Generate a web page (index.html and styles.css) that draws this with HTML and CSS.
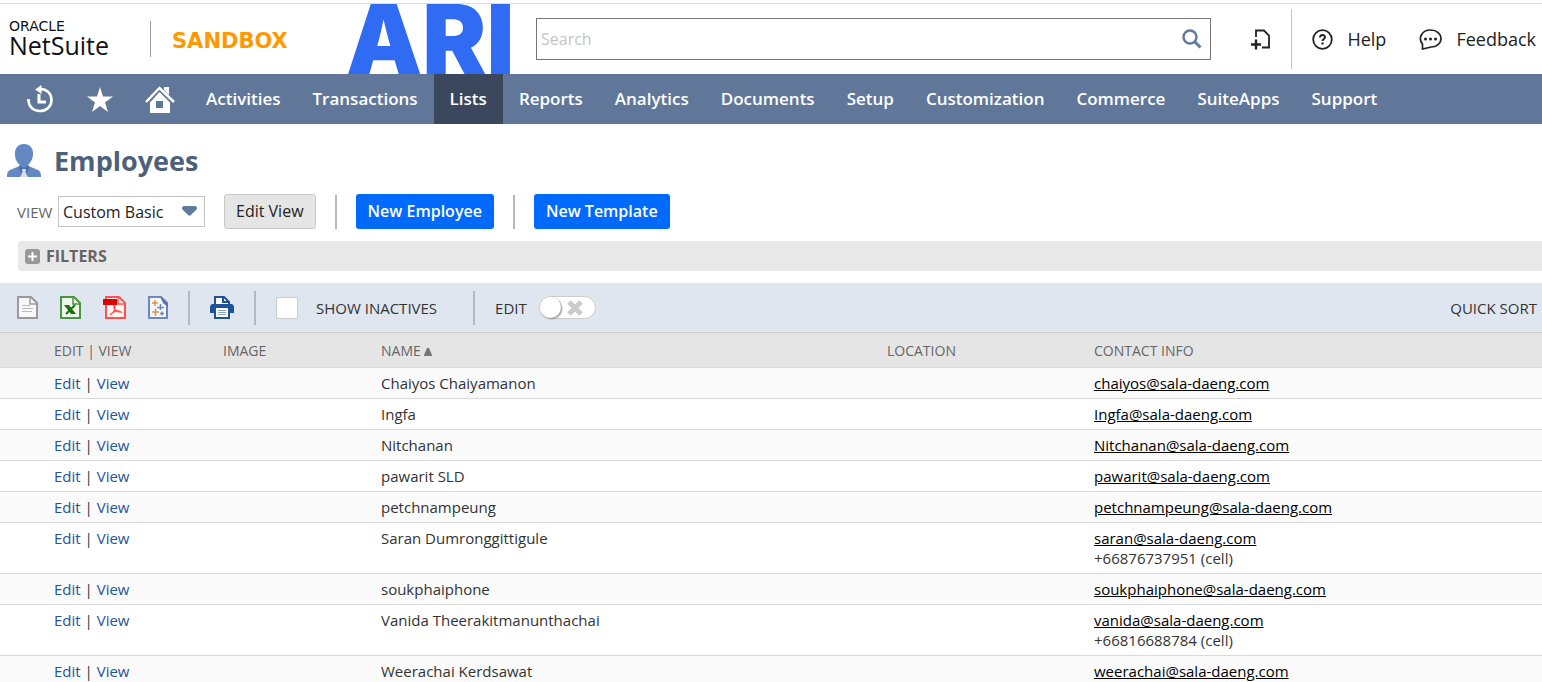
FILE: index.html
```html
<!DOCTYPE html>
<html lang="en">
<head>
    <meta charset="UTF-8">
    <meta name="viewport" content="width=device-width, initial-scale=1.0">
    <title>Employees - NetSuite</title>
    <link rel="stylesheet" href="styles.css">
</head>
<body>
    <header class="header">
        <a href="#" class="brand">
            <span class="brand-oracle">ORACLE</span>
            <span class="brand-name">NetSuite</span>
        </a>
        <span class="environment">SANDBOX</span>
        <a href="#" class="company">ARI</a>
        <form class="search">
            <input type="text" placeholder="Search" aria-label="Search">
            <button type="button" aria-label="Run search">
                <svg width="20" height="20" viewBox="0 0 20 20" fill="none" stroke="#5f7a9f" stroke-width="2.4"><circle cx="8" cy="8" r="6.5"/><path d="M12.5 12.5L18.5 18.5" stroke-width="3"/></svg>
            </button>
        </form>
        <button type="button" class="create-new" aria-label="Create new">
            <svg width="20" height="21" viewBox="0 0 20 21" fill="none" stroke="#222" stroke-width="1.8"><path d="M5 8V1.5H13L18 6.5V18.5H11"/><path d="M0 15.5H10M5 10.5V20.5" stroke-width="2.4"/></svg>
        </button>
        <div class="header-links">
            <a href="#" class="header-link">
                <svg width="21" height="21" viewBox="0 0 21 21" fill="none" stroke="#222" stroke-width="1.8"><circle cx="10.5" cy="10.5" r="9.3"/><path d="M8 8.5C8 5.2 13 5.2 13 8.2C13 10 10.5 10 10.5 12" stroke-width="2"/><path d="M10.5 13.5V15.5" stroke-width="2.2"/></svg>
                Help
            </a>
            <a href="#" class="header-link">
                <svg width="23" height="21" viewBox="0 0 23 21" fill="none" stroke="#222" stroke-width="1.7"><path d="M3.5 20V15C-1.5 9 3 1 11.5 1C18 1 22 5 22 9.5C22 14.500 17.5 18 12 18Z"/><g fill="#222" stroke="none"><circle cx="6.5" cy="10" r="1.5"/><circle cx="11.5" cy="10" r="1.5"/><circle cx="16.5" cy="10" r="1.5"/></g></svg>
                Feedback
            </a>
        </div>
    </header>

    <nav class="navbar">
        <a href="#" class="nav-icon" aria-label="Recent records">
            <svg width="26" height="28" viewBox="0 0 26 28" fill="none" stroke="#fff"><path d="M1.5 14C1 21 6 26 13 26C20 26 24.5 21 24.5 15C24.5 8.5 20 4 13 4" stroke-width="2.6"/><path d="M8 4.5L14.5 0V9Z" fill="#fff" stroke="none"/><path d="M12 9V17H19" stroke-width="3"/></svg>
        </a>
        <a href="#" class="nav-icon" aria-label="Shortcuts">
            <svg width="26" height="25" viewBox="0 0 26 25"><path d="M13 0L16 9.5H26L18 15.4L21 25L13 19L5 25L8 15.4L0 9.5H10Z" fill="#fff"/></svg>
        </a>
        <a href="#" class="nav-icon" aria-label="Home">
            <svg width="30" height="27" viewBox="0 0 30 27"><path d="M19 1H24V9L19 4Z" fill="#fff"/><path d="M1 16L14.5 2L29 16" fill="none" stroke="#fff" stroke-width="2.5"/><path d="M14.5 6L25 16.5V27H5V16.5ZM11 15V22H18V15Z" fill="#fff" fill-rule="evenodd"/></svg>
        </a>
        <a href="#">Activities</a>
        <a href="#">Transactions</a>
        <a href="#" class="active">Lists</a>
        <a href="#">Reports</a>
        <a href="#">Analytics</a>
        <a href="#">Documents</a>
        <a href="#">Setup</a>
        <a href="#">Customization</a>
        <a href="#">Commerce</a>
        <a href="#">SuiteApps</a>
        <a href="#">Support</a>
    </nav>

    <main>
        <div class="page-title">
            <svg width="34" height="34" viewBox="0 0 34 34"><path d="M17 0C23 0 26.500 4 26 11C25.5 16 23 19 21.5 20.5V22L31 26C33.5 27.5 34 29 34 33H0C0 29 .5 27.5 3 26L12.5 22V20.5C10 18.5 8 15 8 11C7.5 4 11 0 17 0Z" fill="#6488c3"/><path d="M12.5 21.5L17 24L21.5 21.5L22.5 24L20 27L21 33H13L14 27L11.5 24Z" fill="#4d70a8"/><path d="M15 25H19L18.5 28L21 33H13L15.5 28Z" fill="#d5dcea"/></svg>
            <h1>Employees</h1>
        </div>

        <div class="view-bar">
            <label for="view">VIEW</label>
            <div class="select-wrap">
                <select id="view">
                    <option>Custom Basic</option>
                    <option>All</option>
                </select>
                <svg width="15" height="10" viewBox="0 0 15 10"><path d="M2 0H13Q15 0 15 3L8.5 9.5H6.5L0 3Q0 0 2 0Z" fill="#5f7a9f"/></svg>
            </div>
            <button type="button" class="btn">Edit View</button>
            <span class="separator"></span>
            <button type="button" class="btn btn-primary">New Employee</button>
            <span class="separator"></span>
            <button type="button" class="btn btn-primary">New Template</button>
        </div>

        <button type="button" class="filters">
            <svg width="15" height="15" viewBox="0 0 15 15"><rect width="15" height="15" rx="3" fill="#999"/><path d="M3 7.5H12M7.5 3V12" stroke="#fff" stroke-width="2"/></svg>
            FILTERS
        </button>

        <div class="toolbar">
            <div class="exports">
                <button type="button" aria-label="Export CSV">
                    <svg width="21" height="23" viewBox="0 0 21 23"><path d="M1 1H14L20 7V22H1Z" fill="#f8f8f8" stroke="#999" stroke-width="2"/><path d="M13 1V8H20" fill="none" stroke="#999" stroke-width="1.5"/><path d="M5 9.5H13M5 12.5H16M5 15.5H15" stroke="#bbb"/></svg>
                </button>
                <button type="button" aria-label="Export Excel">
                    <svg width="21" height="23" viewBox="0 0 21 23"><path d="M1 1H14L20 7V22H1Z" fill="#eef6ea" stroke="#4a9444" stroke-width="2"/><path d="M13 1V8H20" fill="none" stroke="#4a9444" stroke-width="1.5"/><path d="M4 9H9L16 18H11Z" fill="#1b7010"/><path d="M15 9L6 18" stroke="#1b7010" stroke-width="2"/></svg>
                </button>
                <button type="button" aria-label="Export PDF">
                    <svg width="23" height="23" viewBox="0 0 23 23"><path d="M3 1H16L22 7V22H3Z" fill="#fff5f5" stroke="#ff5050" stroke-width="2"/><path d="M15 1V8H22" fill="none" stroke="#ff5050" stroke-width="1.5"/><path d="M7 19C12 16 13 11 11 9C10 13 13 16 18 16C14 13 9 17 7 19Z" fill="none" stroke="#ff5050" stroke-width="1.3"/><path d="M0 3H14V9H0Z" fill="#dc0000"/></svg>
                </button>
                <button type="button" aria-label="Tableau workbook">
                    <svg width="20" height="23" viewBox="0 0 20 23" fill="none"><path d="M1 1H13L19 7V22H1Z" fill="#f3f6fd" stroke="#6d87c0" stroke-width="2"/><path d="M12 0L20 8V11L15 7Z" fill="#5872a5"/><path d="M4 7H10M7 4V10M4 16H11M7.5 12.5V20" stroke="#df9347" stroke-width="1.5"/><path d="M9 11.5H16M12.5 8V14M12 17.5H16M14 15.5V19.5" stroke="#688daf" stroke-width="1.5"/></svg>
                </button>
            </div>
            <span class="separator"></span>
            <button type="button" aria-label="Print">
                <svg width="24" height="23" viewBox="0 0 24 23"><path d="M5 1H14L19 6V11H5Z" fill="#fff" stroke="#1e5399" stroke-width="2"/><path d="M13 1V6H19" fill="none" stroke="#1e5399" stroke-width="2"/><path d="M2 8H22L24 10V17H20V23H4V17H0V10Z" fill="#1e5399"/><path d="M6 12H18V21H6Z" fill="#fff"/><path d="M8 14.5H16M8 16.5H16M8 18.5H16" stroke="#8aa5ca"/></svg>
            </button>
            <span class="separator"></span>
            <label class="inactives"><input type="checkbox"> SHOW INACTIVES</label>
            <span class="separator"></span>
            <label class="edit-toggle">EDIT
                <span class="switch">
                    <input type="checkbox">
                    <svg width="16" height="16" viewBox="0 0 16 16"><path d="M2 2L14 14M14 2L2 14" stroke="#ccc" stroke-width="5"/></svg>
                </span>
            </label>
            <span class="quick-sort">QUICK SORT</span>
        </div>

        <table class="employees">
            <colgroup>
                <col class="col-actions">
                <col class="col-image">
                <col class="col-name">
                <col class="col-location">
                <col>
            </colgroup>
            <thead>
                <tr>
                    <th>EDIT | VIEW</th>
                    <th>IMAGE</th>
                    <th>NAME <svg width="8" height="8" viewBox="0 0 8 8"><path d="M3 0H5L8 7V8H0V7Z" fill="#777"/></svg></th>
                    <th>LOCATION</th>
                    <th>CONTACT INFO</th>
                </tr>
            </thead>
            <tbody>
                <tr>
                    <td><a href="#">Edit</a> | <a href="#">View</a></td>
                    <td></td>
                    <td>Chaiyos Chaiyamanon</td>
                    <td></td>
                    <td><a href="#" class="email">chaiyos@sala-daeng.com</a></td>
                </tr>
                <tr>
                    <td><a href="#">Edit</a> | <a href="#">View</a></td>
                    <td></td>
                    <td>Ingfa</td>
                    <td></td>
                    <td><a href="#" class="email">Ingfa@sala-daeng.com</a></td>
                </tr>
                <tr>
                    <td><a href="#">Edit</a> | <a href="#">View</a></td>
                    <td></td>
                    <td>Nitchanan</td>
                    <td></td>
                    <td><a href="#" class="email">Nitchanan@sala-daeng.com</a></td>
                </tr>
                <tr>
                    <td><a href="#">Edit</a> | <a href="#">View</a></td>
                    <td></td>
                    <td>pawarit SLD</td>
                    <td></td>
                    <td><a href="#" class="email">pawarit@sala-daeng.com</a></td>
                </tr>
                <tr>
                    <td><a href="#">Edit</a> | <a href="#">View</a></td>
                    <td></td>
                    <td>petchnampeung</td>
                    <td></td>
                    <td><a href="#" class="email">petchnampeung@sala-daeng.com</a></td>
                </tr>
                <tr>
                    <td><a href="#">Edit</a> | <a href="#">View</a></td>
                    <td></td>
                    <td>Saran Dumronggittigule</td>
                    <td></td>
                    <td><a href="#" class="email">saran@sala-daeng.com</a><br>+66876737951 (cell)</td>
                </tr>
                <tr>
                    <td><a href="#">Edit</a> | <a href="#">View</a></td>
                    <td></td>
                    <td>soukphaiphone</td>
                    <td></td>
                    <td><a href="#" class="email">soukphaiphone@sala-daeng.com</a></td>
                </tr>
                <tr>
                    <td><a href="#">Edit</a> | <a href="#">View</a></td>
                    <td></td>
                    <td>Vanida Theerakitmanunthachai</td>
                    <td></td>
                    <td><a href="#" class="email">vanida@sala-daeng.com</a><br>+66816688784 (cell)</td>
                </tr>
                <tr>
                    <td><a href="#">Edit</a> | <a href="#">View</a></td>
                    <td></td>
                    <td>Weerachai Kerdsawat</td>
                    <td></td>
                    <td><a href="#" class="email">weerachai@sala-daeng.com</a></td>
                </tr>
            </tbody>
        </table>
    </main>
</body>
</html>
```
FILE: styles.css
```css
/* Base Styles */
* {
    margin: 0;
    padding: 0;
    box-sizing: border-box;
}

:root {
    --nav: #607799;
    --nav-active: #3b475d;
    --primary: #006aff;
    --heading: #4d5f79;
    --link: #255599;
    --text: #333;
    --muted: #666;
}

body {
    font-family: 'Open Sans', sans-serif;
    font-size: 14px;
    line-height: 20px;
    color: var(--text);
    background: #fff;
}

a {
    color: inherit;
    text-decoration: none;
}

button {
    font: inherit;
    color: inherit;
    border: none;
    background: none;
    cursor: pointer;
}

svg {
    display: block;
    flex-shrink: 0;
}

/* Header */
.header {
    display: flex;
    align-items: center;
    height: 71px;
    margin-top: 3px;
    border-top: 1px solid #ddd;
    padding-right: 6px;
    color: #222;
}

.brand {
    display: flex;
    flex-direction: column;
    justify-content: center;
    width: 142px;
    height: 36px;
    margin-left: 9px;
    border-right: 1px solid #999;
    color: #111;
}

.brand-oracle {
    font-family: 'DejaVu Sans', sans-serif;
    font-size: 14px;
    line-height: 12px;
}

.brand-name {
    font-size: 25px;
    line-height: 26px;
}

.environment {
    width: 195px;
    padding: 4px 0 0 21px;
    font-family: 'DejaVu Sans', sans-serif;
    font-size: 21px;
    font-weight: bold;
    color: #ff9900;
}

.company {
    width: 190px;
    font-family: Inter, sans-serif;
    font-size: 96px;
    font-weight: 900;
    line-height: 70px;
    color: #2f6bf3;
}

.search {
    display: flex;
    align-items: center;
    flex: 1;
    height: 42px;
    border: 1px solid #777;
}

.search input {
    flex: 1;
    height: 100%;
    padding-left: 4px;
    border: none;
    outline: none;
    font: inherit;
    font-size: 16px;
}

.search input::placeholder {
    color: #c4c4c4;
}

.search button {
    padding: 0 8px;
}

.create-new {
    padding: 0 20px 0 40px;
}

.header-links {
    display: flex;
    align-items: center;
    gap: 33px;
    height: 60px;
    padding-left: 20px;
    border-left: 1px solid #c4c4c4;
}

.header-link {
    display: flex;
    align-items: center;
    gap: 14px;
    font-size: 18px;
}

/* Navigation */
.navbar {
    display: flex;
    height: 50px;
    padding-left: 10px;
    background: var(--nav);
    color: #fff;
    font-size: 17px;
    font-weight: 600;
}

.navbar a {
    display: flex;
    align-items: center;
    padding: 0 16px;
}

.navbar .nav-icon {
    justify-content: center;
    width: 60px;
    padding: 0;
}

.navbar .active {
    background: var(--nav-active);
}

/* Page title and view picker */
.page-title {
    display: flex;
    align-items: center;
    gap: 13px;
    height: 70px;
    padding: 4px 0 0 7px;
}

h1 {
    font-size: 27px;
    line-height: 36px;
    color: var(--heading);
}

.view-bar {
    display: flex;
    align-items: center;
    height: 35px;
    padding-left: 17px;
    font-size: 16px;
}

.view-bar label {
    width: 41px;
    font-size: 15px;
    color: var(--muted);
}

.select-wrap {
    position: relative;
    margin-right: 19px;
}

.select-wrap select {
    width: 147px;
    height: 31px;
    padding-left: 4px;
    border: 1px solid #c4c4c4;
    background: #fff;
    appearance: none;
    font: inherit;
    color: #222;
}

.select-wrap svg {
    position: absolute;
    top: 10px;
    right: 8px;
    pointer-events: none;
}

.separator {
    width: 2px;
    height: 34px;
    margin: 0 20px;
    background: #b5baba;
}

.view-bar .separator {
    margin: 0 19px;
}

.btn {
    height: 35px;
    padding: 0 11px 2px;
    border: 1px solid #c8c8c8;
    border-radius: 3px;
    background: #e5e5e5;
    color: #222;
    font-weight: 500;
}

.btn-primary {
    padding: 0 12px 2px;
    border: none;
    background: var(--primary);
    color: #fff;
    font-weight: 600;
}

.filters {
    display: flex;
    align-items: center;
    gap: 6px;
    width: calc(100% - 18px);
    height: 30px;
    margin: 12px 0 12px 18px;
    padding-left: 7px;
    border-radius: 4px 0 0 4px;
    background: #e9e9e9;
    color: var(--muted);
    font-size: 16px;
    font-weight: 700;
}

/* List toolbar */
.toolbar {
    display: flex;
    align-items: center;
    height: 50px;
    padding: 0 5px 0 17px;
    border-bottom: 1px solid #ccc;
    background: #dfe6ef;
    font-size: 15px;
}

.exports {
    display: flex;
    gap: 22px;
}

.inactives,
.edit-toggle {
    display: flex;
    align-items: center;
}

.inactives {
    gap: 18px;
    margin-right: 16px;
}

.inactives input {
    width: 22px;
    height: 22px;
    border: 1px solid #ccc;
    background: #fff;
    appearance: none;
}

.edit-toggle {
    gap: 12px;
}

.switch {
    display: flex;
    align-items: center;
    gap: 6px;
    width: 57px;
    height: 23px;
    border: 1px solid #ccc;
    border-radius: 12px;
    background: #fff;
}

.switch input {
    width: 21px;
    height: 21px;
    border-radius: 50%;
    background: #fff;
    box-shadow: 1px 1px 2px #888;
    appearance: none;
}

.quick-sort {
    margin-left: auto;
}

/* Employee list */
.employees {
    width: 100%;
    table-layout: fixed;
    border-collapse: separate;
    border-spacing: 0;
    font-size: 15px;
}

.col-actions { width: 223px; }
.col-image { width: 158px; }
.col-name { width: 506px; }
.col-location { width: 207px; }

.employees th {
    height: 35px;
    padding-top: 2px;
    border-bottom: 1px solid #d9d9d9;
    background: #e5e5e5;
    color: var(--muted);
    font-size: 14px;
    font-weight: 400;
    text-align: left;
}

.employees th svg {
    display: inline-block;
}

.employees td {
    padding: 5px 0;
    border-bottom: 1px solid #d9d9d9;
    vertical-align: top;
}

.employees th:first-child,
.employees td:first-child {
    padding-left: 54px;
}

.employees tbody tr:nth-child(odd) {
    background: #fafafa;
}

.employees td a {
    color: var(--link);
}

.employees td .email {
    color: #000;
    text-decoration: underline;
}
```
